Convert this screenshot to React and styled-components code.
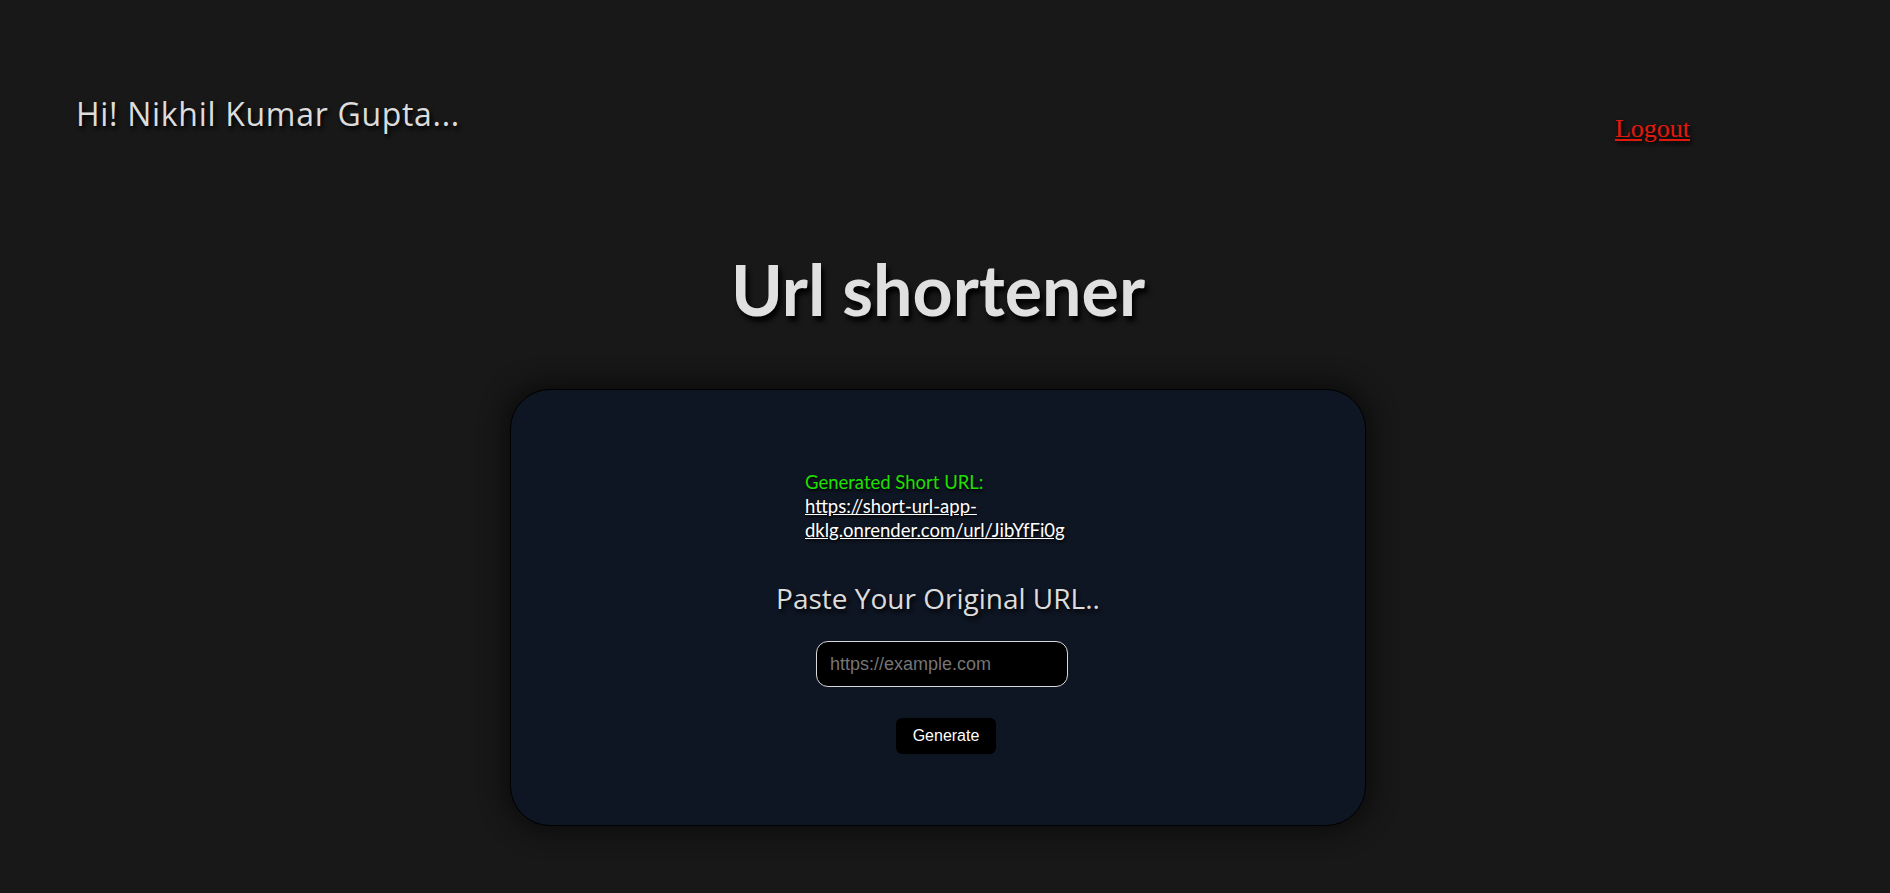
import styled, { createGlobalStyle } from 'styled-components';

const GlobalStyle = createGlobalStyle`
	html, body {
		margin: 0;
		padding: 0;
		background-color: #181818;
	}
	body {
		min-height: 893px;
		font-family: 'Open Sans', sans-serif;
	}
`;

const App = () => {
	return (
		<>
			<GlobalStyle />
			<Page>
				<Header>
					<Greeting>Hi! Nikhil Kumar Gupta...</Greeting>
					<LogoutLink href="#">Logout</LogoutLink>
				</Header>

				<Title>Url shortener</Title>

				<Card>
					<Result>
						<span>Generated Short URL:</span>
						<a href="#">https://short-url-app-dklg.onrender.com/url/JibYfFi0g</a>
					</Result>

					<Prompt>Paste Your Original URL..</Prompt>
					<UrlInput type="text" placeholder="https://example.com" />
					<GenerateButton>Generate</GenerateButton>
				</Card>
			</Page>
		</>
	);
};

export default App;

const Page = styled.div`
	display: flex;
	flex-direction: column;
	align-items: center;
	padding: 0 14px 60px 0;
`;

const Header = styled.header`
	width: 100%;
	box-sizing: border-box;
	display: flex;
	justify-content: space-between;
	align-items: flex-start;
	padding: 0 186px 0 76px;
`;

const Greeting = styled.h2`
	margin: 94px 0 0;
	font-family: 'Open Sans', sans-serif;
	font-size: 32px;
	line-height: 40px;
	font-weight: 400;
	letter-spacing: 0.7px;
	color: #dcdcdc;
	text-shadow: 2px 3px 4px #000;
`;

const LogoutLink = styled.a`
	margin-top: 113px;
	font-family: 'Liberation Serif', serif;
	font-size: 26px;
	line-height: 32px;
	color: #e3180c;
	text-decoration: underline;
	text-shadow: 2px 3px 4px #000;
`;

const Title = styled.h1`
	margin: 104px 0 0;
	font-family: Lato, sans-serif;
	font-size: 70px;
	line-height: 80px;
	font-weight: 700;
	color: #e0e0e0;
	text-shadow: 3px 5px 5px #000;
`;

const Card = styled.main`
	margin-top: 60px;
	width: 856px;
	height: 437px;
	box-sizing: border-box;
	display: flex;
	flex-direction: column;
	align-items: center;
	padding-top: 80px;
	background-color: #0f1623;
	border: 1px solid #000;
	border-radius: 40px;
	box-shadow: 0 0 24px 6px #0c0c0c;
`;

const Result = styled.div`
	width: 266px;
	display: flex;
	flex-direction: column;
	font-family: Lato, sans-serif;
	font-size: 18.5px;
	line-height: 24px;

	span {
		color: #1fe000;
		text-shadow: 1px 2px 3px #000;
	}

	a {
		color: #fff;
		text-decoration: underline;
		text-shadow: 1px 2px 3px #000;
	}
`;

const Prompt = styled.h3`
	margin: 38px 0 0;
	font-family: 'Open Sans', sans-serif;
	font-size: 28px;
	line-height: 36px;
	font-weight: 400;
	color: #dcdcdc;
	text-shadow: 2px 3px 4px #000;
`;

const UrlInput = styled.input`
	margin: 25px 0 0 8px;
	width: 252px;
	height: 46px;
	box-sizing: border-box;
	padding: 0 13px;
	background-color: #000;
	border: 1px solid #d8d8d8;
	border-radius: 12px;
	color: #fff;
	font-family: 'Liberation Sans', Arial, sans-serif;
	font-size: 18px;
	outline: none;

	::placeholder {
		color: #767676;
	}
`;

const GenerateButton = styled.button`
	margin: 31px 0 0 16px;
	width: 100px;
	height: 36px;
	background-color: #000;
	border: none;
	border-radius: 6px;
	color: #fff;
	font-family: 'Liberation Sans', Arial, sans-serif;
	font-size: 16px;
	cursor: pointer;
`;
